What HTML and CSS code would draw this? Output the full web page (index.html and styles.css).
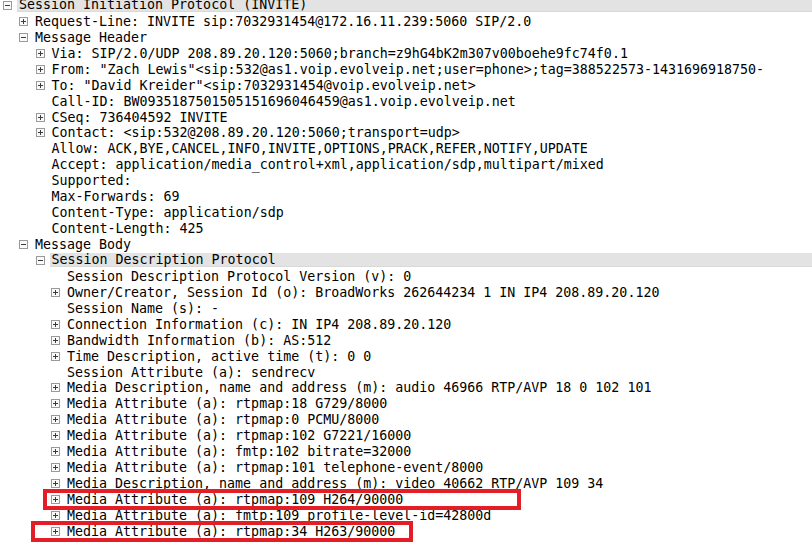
FILE: index.html
```html
<!DOCTYPE html>
<html lang="en">
<head>
    <meta charset="UTF-8">
    <meta name="viewport" content="width=device-width, initial-scale=1.0">
    <title>Packet Details - SIP INVITE</title>
    <link rel="stylesheet" href="styles.css">
</head>
<body>
    <div class="details">
        <div class="tree">
            <div class="row l0 selected"><span class="exp minus"></span><span class="label">Session Initiation Protocol (INVITE)</span></div>
            <div class="row l1"><span class="exp plus"></span><span class="label">Request-Line: INVITE sip:7032931454@172.16.11.239:5060 SIP/2.0</span></div>
            <div class="row l1"><span class="exp minus"></span><span class="label">Message Header</span></div>
            <div class="row l2"><span class="exp plus"></span><span class="label">Via: SIP/2.0/UDP 208.89.20.120:5060;branch=z9hG4bK2m307v00boehe9fc74f0.1</span></div>
            <div class="row l2"><span class="exp plus"></span><span class="label">From: "Zach Lewis"&lt;sip:532@as1.voip.evolveip.net;user=phone&gt;;tag=388522573-1431696918750-</span></div>
            <div class="row l2"><span class="exp plus"></span><span class="label">To: "David Kreider"&lt;sip:7032931454@voip.evolveip.net&gt;</span></div>
            <div class="row l2"><span class="exp"></span><span class="label">Call-ID: BW0935187501505151696046459@as1.voip.evolveip.net</span></div>
            <div class="row l2"><span class="exp plus"></span><span class="label">CSeq: 736404592 INVITE</span></div>
            <div class="row l2"><span class="exp plus"></span><span class="label">Contact: &lt;sip:532@208.89.20.120:5060;transport=udp&gt;</span></div>
            <div class="row l2"><span class="exp"></span><span class="label">Allow: ACK,BYE,CANCEL,INFO,INVITE,OPTIONS,PRACK,REFER,NOTIFY,UPDATE</span></div>
            <div class="row l2"><span class="exp"></span><span class="label">Accept: application/media_control+xml,application/sdp,multipart/mixed</span></div>
            <div class="row l2"><span class="exp"></span><span class="label">Supported: </span></div>
            <div class="row l2"><span class="exp"></span><span class="label">Max-Forwards: 69</span></div>
            <div class="row l2"><span class="exp"></span><span class="label">Content-Type: application/sdp</span></div>
            <div class="row l2"><span class="exp"></span><span class="label">Content-Length: 425</span></div>
            <div class="row l1"><span class="exp minus"></span><span class="label">Message Body</span></div>
            <div class="row l2 selected"><span class="exp minus"></span><span class="label">Session Description Protocol</span></div>
            <div class="row l3"><span class="exp"></span><span class="label">Session Description Protocol Version (v): 0</span></div>
            <div class="row l3"><span class="exp plus"></span><span class="label">Owner/Creator, Session Id (o): BroadWorks 262644234 1 IN IP4 208.89.20.120</span></div>
            <div class="row l3"><span class="exp"></span><span class="label">Session Name (s): -</span></div>
            <div class="row l3"><span class="exp plus"></span><span class="label">Connection Information (c): IN IP4 208.89.20.120</span></div>
            <div class="row l3"><span class="exp plus"></span><span class="label">Bandwidth Information (b): AS:512</span></div>
            <div class="row l3"><span class="exp plus"></span><span class="label">Time Description, active time (t): 0 0</span></div>
            <div class="row l3"><span class="exp"></span><span class="label">Session Attribute (a): sendrecv</span></div>
            <div class="row l3"><span class="exp plus"></span><span class="label">Media Description, name and address (m): audio 46966 RTP/AVP 18 0 102 101</span></div>
            <div class="row l3"><span class="exp plus"></span><span class="label">Media Attribute (a): rtpmap:18 G729/8000</span></div>
            <div class="row l3"><span class="exp plus"></span><span class="label">Media Attribute (a): rtpmap:0 PCMU/8000</span></div>
            <div class="row l3"><span class="exp plus"></span><span class="label">Media Attribute (a): rtpmap:102 G7221/16000</span></div>
            <div class="row l3"><span class="exp plus"></span><span class="label">Media Attribute (a): fmtp:102 bitrate=32000</span></div>
            <div class="row l3"><span class="exp plus"></span><span class="label">Media Attribute (a): rtpmap:101 telephone-event/8000</span></div>
            <div class="row l3"><span class="exp plus"></span><span class="label">Media Description, name and address (m): video 40662 RTP/AVP 109 34</span></div>
            <div class="row l3"><span class="exp plus"></span><span class="label">Media Attribute (a): rtpmap:109 H264/90000</span></div>
            <div class="row l3"><span class="exp plus"></span><span class="label">Media Attribute (a): fmtp:109 profile-level-id=42800d</span></div>
            <div class="row l3"><span class="exp plus"></span><span class="label">Media Attribute (a): rtpmap:34 H263/90000</span></div>
        </div>

        <!-- annotation boxes drawn over the tree -->
        <div class="mark mark-h264"></div>
        <div class="mark mark-h263"></div>
    </div>
</body>
</html>
```

FILE: styles.css
```css
body {
    margin: 0;
    background: #fff;
    color: #000;
    font-family: "DejaVu Sans Mono", "Liberation Mono", monospace;
    font-size: 13.3px;
    overflow: hidden;
}
.details {
    position: relative;
    width: 812px;
    height: 543px;
    overflow: hidden;
}
.tree {
    margin-top: -2.5px;
}
.row {
    display: flex;
    align-items: center;
    height: 15.94px;
    white-space: pre;
}
.l0 { padding-left: 3px; }
.l1 { padding-left: 19px; }
.l2 { padding-left: 35.5px; }
.l3 { padding-left: 51px; }
.exp {
    flex: none;
    width: 9px;
    height: 9px;
    margin-right: 5px;
    box-sizing: border-box;
}
.exp.plus, .exp.minus {
    border: 1px solid #9a9a9a;
    background:
        linear-gradient(#3a3a3a, #3a3a3a) center / 5px 1px no-repeat,
        #fafafa;
}
.exp.plus {
    background:
        linear-gradient(#3a3a3a, #3a3a3a) center / 5px 1px no-repeat,
        linear-gradient(#3a3a3a, #3a3a3a) center / 1px 5px no-repeat,
        #fafafa;
}
.label {
    padding-left: 2px;
    line-height: 13px;
}
.selected .label {
    flex: 1;
    background: #e3e3e3;
    border-bottom: 1px solid #d9d9d9;
}
.mark {
    position: absolute;
    box-sizing: border-box;
    border: 4px solid #e31e26;
}
.mark-h264 {
    left: 43px;
    top: 489px;
    width: 478px;
    height: 21px;
}
.mark-h263 {
    left: 31px;
    top: 521px;
    width: 382px;
    height: 21px;
}
```
